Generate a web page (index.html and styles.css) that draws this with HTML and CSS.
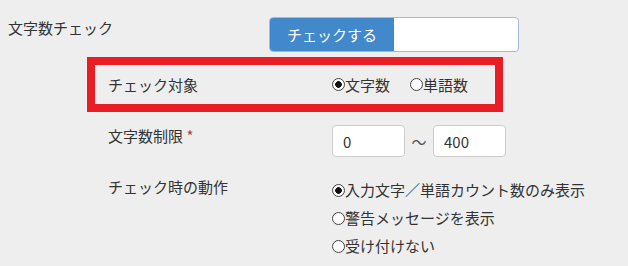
FILE: index.html
```html
<!DOCTYPE html>
<html>
<head>
<meta charset="utf-8">
<title>文字数チェック</title>
<link rel="stylesheet" href="styles.css">
</head>
<body>
<div class="form">
  <div class="row-top">
    <div class="top-label">文字数チェック</div>
    <div class="toggle">
      <span class="toggle-on">チェックする</span>
      <span class="toggle-off"></span>
    </div>
  </div>

  <div class="sub highlight">
    <div class="sub-label">チェック対象</div>
    <div class="choices inline">
      <label class="choice"><input type="radio" name="target" checked>文字数</label>
      <label class="choice"><input type="radio" name="target">単語数</label>
    </div>
  </div>

  <div class="sub limit">
    <div class="sub-label">文字数制限 <span class="req">*</span></div>
    <div class="range">
      <input type="text" class="num" value="0">
      <span class="tilde">～</span>
      <input type="text" class="num" value="400">
    </div>
  </div>

  <div class="sub action">
    <div class="sub-label">チェック時の動作</div>
    <div class="choices stack">
      <label class="choice"><input type="radio" name="action" checked>入力文字／単語カウント数のみ表示</label>
      <label class="choice"><input type="radio" name="action">警告メッセージを表示</label>
      <label class="choice"><input type="radio" name="action">受け付けない</label>
    </div>
  </div>
</div>
</body>
</html>
```

FILE: styles.css
```css
body {
  margin: 0;
  background-color: #eeeeee;
  font-family: "Noto Sans CJK JP", "Noto Sans", sans-serif;
  font-size: 15px;
  color: #333;
}

.row-top {
  display: flex;
  padding: 17px 0 0 8px;
}

.top-label {
  width: 261px;
  line-height: 21px;
}

.toggle {
  display: flex;
  width: 250px;
  height: 35px;
  box-sizing: border-box;
  border: 1px solid #a3bbd6;
  border-radius: 4px;
  background-color: #fff;
  overflow: hidden;
}

.toggle-on {
  width: 124px;
  background-color: #4289cc;
  color: #fff;
  display: flex;
  align-items: center;
  justify-content: center;
}

.sub {
  display: flex;
  margin-left: 108px;
}

.sub-label {
  width: 224px;
  line-height: 21px;
}

.highlight {
  margin: 5px 0 0 87px;
  width: 416px;
  height: 55px;
  box-sizing: border-box;
  border: 8px solid #e81d25;
  padding-left: 13px;
  align-items: center;
}

.choice {
  display: flex;
  align-items: center;
}

.choices.inline {
  display: flex;
  gap: 20px;
}

.choices.stack {
  line-height: 28px;
}

input[type=radio] {
  -webkit-appearance: none;
  appearance: none;
  width: 13px;
  height: 13px;
  margin: 0;
  border: 1px solid #444;
  border-radius: 50%;
  background-color: #fff;
  box-sizing: border-box;
}

input[type=radio]:checked {
  background: radial-gradient(circle, #111 0, #111 3px, #fff 3.6px);
}

.req {
  color: #b0433f;
}

.limit {
  margin-top: 13px;
}

.range {
  display: flex;
  align-items: center;
}

.num {
  width: 73px;
  height: 32px;
  box-sizing: border-box;
  border: 1px solid #ccc;
  border-radius: 4px;
  padding: 0 10px;
  font-family: "Noto Sans CJK JP", "Noto Sans", sans-serif;
  font-size: 15px;
  color: #333;
  background-color: #fff;
}

.tilde {
  width: 28px;
  text-align: center;
  color: #555;
}

.action {
  margin-top: 19px;
}
```
